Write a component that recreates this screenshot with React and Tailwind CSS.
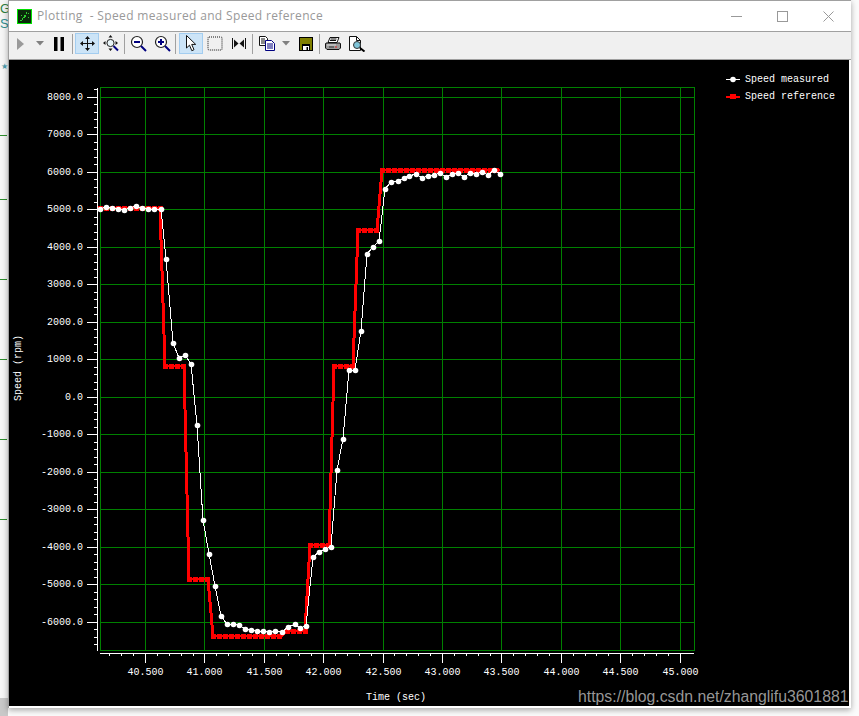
const gridX = [145, 204, 264, 323, 383, 442, 501, 561, 620, 680];
const xLabels = ["40.500", "41.000", "41.500", "42.000", "42.500", "43.000", "43.500", "44.000", "44.500", "45.000"];
const gridY = [97, 134, 172, 209, 247, 284, 322, 359, 397, 434, 472, 509, 547, 584, 622];
const yLabels = ["8000.0", "7000.0", "6000.0", "5000.0", "4000.0", "3000.0", "2000.0", "1000.0", "0.0", "-1000.0", "-2000.0", "-3000.0", "-4000.0", "-5000.0", "-6000.0"];

const measured = [
  [100, 209], [106, 207], [112, 208], [118, 209], [124, 210], [130, 208], [136, 206], [142, 208], [148, 209], [154, 209],
  [161, 209], [166, 259], [173, 343], [179, 358], [185, 355], [191, 364], [197, 425], [203, 520], [209, 554], [215, 586],
  [221, 616], [227, 624], [233, 624], [239, 625], [245, 629], [251, 630], [257, 631], [263, 631], [269, 632], [275, 631],
  [282, 632], [288, 627], [295, 624], [300, 628], [306, 626], [313, 557], [319, 552], [325, 549], [331, 547], [337, 470],
  [343, 439], [349, 370], [355, 370], [361, 331], [367, 254], [373, 247], [379, 241], [385, 189], [391, 182], [398, 181],
  [404, 178], [409, 176], [416, 174], [422, 178], [428, 176], [434, 175], [440, 173], [446, 177], [452, 174], [458, 173],
  [464, 177], [470, 173], [476, 174], [482, 172], [488, 175], [494, 170], [500, 174],
];

const reference = [
  [100, 208], [160, 208], [165, 366], [184, 366], [189, 579], [208, 579], [213, 636], [281, 636], [286, 631], [305, 631],
  [310, 545], [329, 545], [334, 366], [353, 366], [358, 230], [377, 230], [382, 170], [500, 170],
];

const steps = (from, to, y) => {
  const out = [];
  for (let x = from; x <= to; x += 6) out.push([x, y]);
  return out;
};

const refMarkers = [
  ...steps(100, 160, 208), ...steps(165, 183, 366), ...steps(189, 207, 579), ...steps(213, 281, 636),
  ...steps(287, 305, 631), ...steps(310, 328, 545), ...steps(334, 352, 366), ...steps(358, 376, 230), ...steps(382, 500, 170),
];

const toPoints = (pts) => pts.map((p) => p.join(",")).join(" ");

const yMinor = [];
for (let y = 89.5; y < 650; y += 7.5) yMinor.push(y);
const xMinor = [];
for (let k = -3; k < 46; k++) xMinor.push(145.5 + k * 11.88);

function Btn({ w = 24, active, children }) {
  const size = w === 14 ? "w-[14px]" : "w-[24px]";
  return (
    <div className={`${size} h-[21px] flex items-center justify-center shrink-0 ${active ? "bg-[#cce4f7] border border-[#a3cdf0]" : ""}`}>
      {children}
    </div>
  );
}

const Sep = () => <div className="w-px h-[20px] bg-[#a0a0a0] shrink-0 mx-px" />;

const Drop = () => (
  <svg width="8" height="5" viewBox="0 0 8 5"><path d="M0 0h8L4 4.5z" fill="#808080" /></svg>
);

function Magnifier({ plus }) {
  return (
    <svg width="17" height="17" viewBox="0 0 17 17" fill="none">
      <circle cx="7" cy="7" r="5.5" stroke="#222" strokeWidth="1.2" fill="#fff" />
      <path d="M11 11l5 5" stroke="#000080" strokeWidth="2" />
      <path d="M4 7h6" stroke="#000080" strokeWidth="2" />
      {plus && <path d="M7 4v6" stroke="#000080" strokeWidth="2" />}
    </svg>
  );
}

function Toolbar() {
  return (
    <div className="h-[28px] bg-[#f0f0f0] border-t border-[#a0a0a0] flex items-center pb-[4px] shrink-0">
      <Btn>
        <svg width="8" height="12" viewBox="0 0 8 12"><path d="M0 0l7 6-7 6z" fill="#9a9a9a" /></svg>
      </Btn>
      <Btn w={14}><Drop /></Btn>
      <Btn>
        <svg width="10" height="14" viewBox="0 0 10 14"><path d="M0 0h3.5v14H0zM6.5 0H10v14H6.5z" fill="#000" /></svg>
      </Btn>
      <Sep />
      <div className="w-[1px]" />
      <Btn active>
        <svg width="15" height="15" viewBox="0 0 15 15" fill="#111">
          <path d="M7 2h1v11H7zM2 7h11v1H2z" />
          <path d="M7.5 0l2.5 3H5zM7.5 15L5 12h5zM0 7.5L3 5v5zM15 7.5L12 10V5z" />
        </svg>
      </Btn>
      <Btn>
        <svg width="17" height="17" viewBox="0 0 17 17" fill="none">
          <circle cx="7.5" cy="8" r="3.6" stroke="#222" fill="#e8f4f8" />
          <path d="M10.5 11l4.5 4.5" stroke="#000080" strokeWidth="2" />
          <path d="M7.5 0l2 2.500h-4zM7.500 16l-2-2.500h4zM0 8l2.500-2v4zM15 8l-2.500 2V6z" fill="#111" />
        </svg>
      </Btn>
      <Sep />
      <Btn><Magnifier /></Btn>
      <Btn><Magnifier plus /></Btn>
      <Sep />
      <div className="w-[2px]" />
      <Btn active>
        <svg width="10" height="17" viewBox="0 0 10 17">
          <path d="M.5.500v12.500l3-2.800 2.300 5.500 2.200-1-2.300-5.300h4z" fill="#fff" stroke="#111" strokeWidth="1" />
        </svg>
      </Btn>
      <Btn>
        <svg width="16" height="15" viewBox="0 0 16 15" fill="none">
          <rect x="1" y="1" width="14" height="13" rx="1" stroke="#111" strokeDasharray="1 1" />
        </svg>
      </Btn>
      <Btn>
        <svg width="14" height="11" viewBox="0 0 14 11" fill="#111">
          <path d="M0 0h1v11H0zM13 0h1v11h-1zM2 1.500L6.500 5.500 2 9.500zM12 1.500L7.500 5.500 12 9.500z" />
        </svg>
      </Btn>
      <Sep />
      <div className="w-[1px]" />
      <Btn>
        <svg width="16" height="15" viewBox="0 0 16 15" fill="none">
          <path d="M.5.500h6l2 2v7h-8z" fill="#fff" stroke="#111" />
          <path d="M2 3h4M2 5h4M2 7h4" stroke="#111" />
          <path d="M6.500 4.500h6l3 3v7h-9z" fill="#fff" stroke="#000080" />
          <path d="M8 8h6M8 10h6M8 12h6" stroke="#000080" />
        </svg>
      </Btn>
      <Btn w={14}><Drop /></Btn>
      <div className="w-[1px]" />
      <Btn>
        <svg width="14" height="14" viewBox="0 0 14 14">
          <path d="M0 0h14v14H0z" fill="#000" />
          <path d="M1 1h2v12H1z" fill="#808000" />
          <path d="M11 1h2v12h-2z" fill="#808000" />
          <path d="M3 1h8v6H3z" fill="#808000" />
          <path d="M4 9h6v4H4z" fill="#fff" />
          <path d="M7.500 10h1.500v3H7.500z" fill="#000" />
        </svg>
      </Btn>
      <Sep />
      <Btn>
        <svg width="16" height="14" viewBox="0 0 16 14" fill="none">
          <path d="M5 .500h9l-2 5H3z" fill="#fff" stroke="#111" />
          <path d="M5.500 2h6M5 3.500h6" stroke="#111" />
          <path d="M1 6h14l.5 1v4l-1.500 1.500H2L.500 11V7z" fill="#9a9a9a" stroke="#111" />
          <path d="M2 8h9" stroke="#ddd" />
          <path d="M10 10h2" stroke="#e02020" />
          <path d="M4 10h5" stroke="#333" />
        </svg>
      </Btn>
      <Btn>
        <svg width="17" height="16" viewBox="0 0 17 16" fill="none">
          <path d="M.5.500h7l4 4v10H.5z" fill="#fff" stroke="#111" />
          <path d="M7.500.500v4h4" stroke="#111" />
          <circle cx="8" cy="9" r="3.500" fill="#7fc4d8" stroke="#333" />
          <path d="M11 12l4.500 3.500" stroke="#000" strokeWidth="2" />
        </svg>
      </Btn>
    </div>
  );
}

function Plot() {
  const mono = "font-['Liberation_Mono',monospace] text-[10px]";
  return (
    <svg width="840" height="646" viewBox="9 60 840 646" className="block bg-black shrink-0">
      <g stroke="#008000" fill="none" shapeRendering="crispEdges">
        {gridX.map((x) => <path key={x} d={`M${x + 0.5} 87V651`} />)}
        {gridY.map((y) => <path key={y} d={`M100 ${y + 0.5}H694`} />)}
        <rect x="100.5" y="87.5" width="594" height="563" />
      </g>

      <g stroke="#fff" fill="none" shapeRendering="crispEdges">
        <path d="M97.500 88V651" />
        <path d="M100 653.500H694" />
        {yMinor.map((y) => <path key={y} d={`M94 ${Math.floor(y) + 0.5}H97`} />)}
        {gridY.map((y) => <path key={y} d={`M87 ${y + 0.5}H97`} />)}
        {xMinor.map((x) => <path key={x} d={`M${Math.floor(x) + 0.5} 653V656`} />)}
        {gridX.map((x) => <path key={x} d={`M${x + 0.5} 653V663`} />)}
      </g>

      <g fill="#fff" className={mono}>
        {yLabels.map((label, i) => (
          <text key={label} x="83" y={gridY[i] + 3} textAnchor="end">{label}</text>
        ))}
        {xLabels.map((label, i) => (
          <text key={label} x={gridX[i] + 0.5} y="675" textAnchor="middle">{label}</text>
        ))}
        <text x="396" y="700" textAnchor="middle">Time (sec)</text>
        <text transform="translate(21 368) rotate(-90)" textAnchor="middle">Speed (rpm)</text>
        <text x="745" y="82">Speed measured</text>
        <text x="745" y="99">Speed reference</text>
      </g>

      <g shapeRendering="crispEdges">
        {reference.slice(1).map(([x, y], i) => {
          const [px, py] = reference[i];
          return <line key={x} x1={px} y1={py} x2={x} y2={y} stroke="#f00" strokeWidth={py === y ? 2 : 3} />;
        })}
        {refMarkers.map(([x, y]) => <rect key={`${x}-${y}`} x={x - 2} y={y - 2} width="5" height="5" fill="#f00" />)}
        <polyline points={toPoints(measured)} fill="none" stroke="#fff" strokeWidth="1" />
        <path d="M726 79.500H740" stroke="#fff" />
        <path d="M726 96.500H740" stroke="#f00" strokeWidth="2" />
        <rect x="730" y="94" width="6" height="5" fill="#f00" />
      </g>
      <g fill="#fff">
        {measured.map(([x, y]) => <circle key={x} cx={x + 0.5} cy={y + 0.5} r="2.800" />)}
        <circle cx="733" cy="79.500" r="2.800" />
      </g>

      <text x="578" y="702" fill="#b4b4b4" fillOpacity="0.85" className="font-['Liberation_Sans',sans-serif] text-[15.8px]">
        https://blog.csdn.net/zhanglifu3601881
      </text>
    </svg>
  );
}

function LeftStrip() {
  return (
    <div className="w-[8px] h-[716px] shrink-0 flex flex-col bg-[#f6f6f6] overflow-hidden font-['Liberation_Sans',sans-serif]">
      <div className="text-[13px] leading-[15px] text-[#2f7f3f] pt-px">G</div>
      <div className="text-[13px] leading-[15px] text-[#2f8f8f]">S</div>
      <div className="mt-[32px] text-[8px] leading-[8px] text-[#4f9fb0] pl-px">★</div>
      <div className="mt-[64px] h-px w-[7px] bg-[#2f8f2f]" />
      <div className="mt-[63px] h-px w-[7px] bg-[#2f8f2f]" />
      <div className="mt-[79px] h-px w-[7px] bg-[#2f8f2f]" />
      <div className="mt-[79px] h-px w-[7px] bg-[#2f8f2f]" />
      <div className="mt-[79px] h-px w-[7px] bg-[#2f8f2f]" />
      <div className="mt-[79px] h-px w-[7px] bg-[#2f8f2f]" />
      <div className="mt-[178px] flex-1 bg-[#c8c8c8]" />
    </div>
  );
}

export default function App() {
  return (
    <div className="w-[859px] h-[716px] bg-[#fbfbfb] flex overflow-hidden">
      <LeftStrip />
      <div className="w-[843px] h-[708px] flex flex-col bg-white border-l border-t border-[#a0a0a0] shadow-[0_2px_6px_rgba(0,0,0,0.35)] shrink-0">
        <div className="h-[30px] flex items-center shrink-0 pl-[8px]">
          <svg width="15" height="15" viewBox="0 0 15 15" className="shrink-0">
            <rect x="0.500" y="0.500" width="14" height="14" fill="#0a2a0a" stroke="#00e000" />
            <path d="M3 11h2v1H3zM5 9h1v2H5zM7 6h2v2H7zM6 8h2v1H6zM9 3h1v2H9zM11 4h1v1h-1zM4 6h1v1H4zM11 8h1v1h-1z" fill="#30d030" />
          </svg>
          <span className="ml-[5px] whitespace-pre font-['Open_Sans',sans-serif] text-[12px] tracking-[0.35px] text-[#999999]">Plotting  - Speed measured and Speed reference</span>
          <div className="ml-auto flex items-center mr-[17px] gap-[35px]">
            <svg width="11" height="11" viewBox="0 0 11 11"><path d="M0 5.500h11" stroke="#999" /></svg>
            <svg width="11" height="11" viewBox="0 0 11 11" fill="none"><rect x="0.500" y="0.500" width="10" height="10" stroke="#999" /></svg>
            <svg width="11" height="11" viewBox="0 0 11 11"><path d="M.5.500l10 10M10.500.500l-10 10" stroke="#999" /></svg>
          </div>
        </div>
        <Toolbar />
        <div className="border-t border-[#a0a0a0] shrink-0">
          <Plot />
        </div>
      </div>
    </div>
  );
}
